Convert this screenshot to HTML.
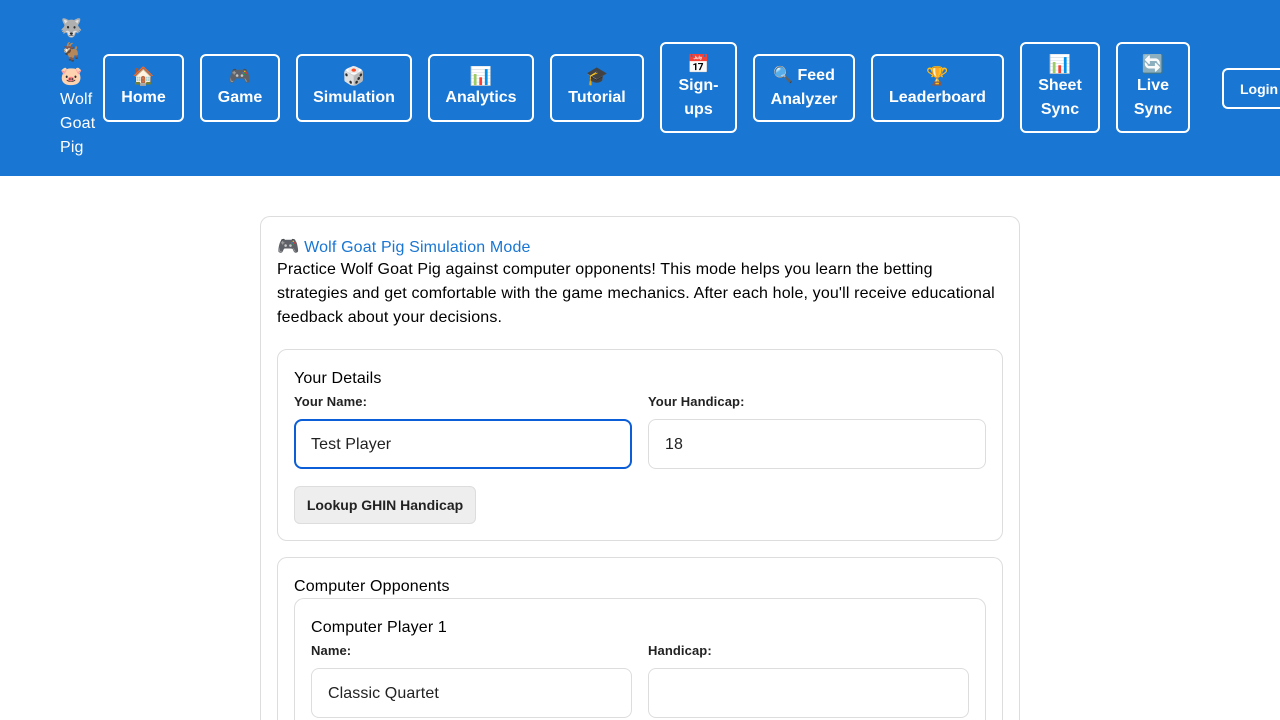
<!DOCTYPE html>
<html><head><meta charset="utf-8"><style>
*{box-sizing:border-box}
html,body{margin:0;width:1280px;height:720px;overflow:hidden}
body{background:#fff;font-family:"Liberation Sans","DejaVu Sans",sans-serif;color:#000}
#w{position:relative;width:1280px;height:720px;overflow:hidden}
.hdr{position:absolute;left:0;top:0;width:1280px;height:176px;background:#1976d2}
.logo{position:absolute;left:60px;top:16px;color:#fff;font-size:16px;line-height:24px;letter-spacing:0.15px}
.logo .e{font-size:18px;line-height:24px;height:24px}
.b{position:absolute;border:2px solid #fff;border-radius:6px;color:#fff;font-weight:bold;font-size:16px;line-height:24px;text-align:center;display:flex;flex-direction:column;justify-content:center;align-items:center}
.b .i{font-size:18px;line-height:20px}
.card{position:absolute;border:1px solid #ddd;border-radius:10px;background:#fff}
.open{border-bottom:none;border-bottom-left-radius:0;border-bottom-right-radius:0}
.lbl{position:absolute;font-size:13px;font-weight:bold;color:#222;letter-spacing:0.1px}
.inp{position:absolute;height:50px;border:1px solid #ddd;border-radius:8px;font-size:16px;padding-left:16px;line-height:50px;color:#222;letter-spacing:0.1px}
.t{position:absolute;font-size:16px;line-height:24px;letter-spacing:0.15px}
</style></head><body><div id="w">
<div class="hdr">
<div class="logo"><div class="e">🐺</div><div class="e">🐐</div><div class="e">🐷</div>Wolf<br>Goat<br>Pig</div>
<div class="b" style="left:103px;top:54px;width:81px;height:68px"><span class="i">🏠</span>Home</div>
<div class="b" style="left:200px;top:54px;width:80px;height:68px"><span class="i">🎮</span>Game</div>
<div class="b" style="left:296px;top:54px;width:116px;height:68px"><span class="i">🎲</span>Simulation</div>
<div class="b" style="left:428px;top:54px;width:106px;height:68px"><span class="i">📊</span>Analytics</div>
<div class="b" style="left:550px;top:54px;width:94px;height:68px"><span class="i">🎓</span>Tutorial</div>
<div class="b" style="left:660px;top:42px;width:77px;height:91px"><span class="i">📅</span>Sign-<br>ups</div>
<div class="b" style="left:753px;top:54px;width:102px;height:68px">🔍 Feed<br>Analyzer</div>
<div class="b" style="left:871px;top:54px;width:133px;height:68px"><span class="i">🏆</span>Leaderboard</div>
<div class="b" style="left:1020px;top:42px;width:80px;height:91px"><span class="i">📊</span>Sheet<br>Sync</div>
<div class="b" style="left:1116px;top:42px;width:74px;height:91px"><span class="i">🔄</span>Live<br>Sync</div>
<div class="b" style="left:1222px;top:68px;width:58px;height:41px;font-size:14px;align-items:flex-start;padding-left:16px;border-right:none;border-radius:6px 0 0 6px">Login</div>
</div>
<div class="card open" style="left:260px;top:216px;width:760px;height:504px"></div>
<div class="t" style="left:277px;top:234px;color:#1976d2"><span style="font-size:18px">🎮</span> Wolf Goat Pig Simulation Mode</div>
<div class="t" style="left:277px;top:258px;width:722px">Practice Wolf Goat Pig against computer opponents! This mode helps you learn the betting strategies and get comfortable with the game mechanics. After each hole, you'll receive educational feedback about your decisions.</div>
<div class="card" style="left:277px;top:349px;width:726px;height:192px"></div>
<div class="t" style="left:294px;top:367px">Your Details</div>
<div class="lbl" style="left:294px;top:394px">Your Name:</div>
<div class="lbl" style="left:648px;top:394px">Your Handicap:</div>
<div class="inp" style="left:294px;top:419px;width:338px;border:2px solid #0b5ed7;padding-left:15px;line-height:48px">Test Player</div>
<div class="inp" style="left:648px;top:419px;width:338px">18</div>
<div style="position:absolute;left:294px;top:486px;width:182px;height:38px;background:#eee;border:1px solid #ddd;border-radius:6px;font-size:14px;font-weight:bold;color:#222;text-align:center;line-height:36px">Lookup GHIN Handicap</div>
<div class="card open" style="left:277px;top:557px;width:726px;height:163px"></div>
<div class="t" style="left:294px;top:575px">Computer Opponents</div>
<div class="card open" style="left:294px;top:598px;width:692px;height:122px"></div>
<div class="t" style="left:311px;top:616px">Computer Player 1</div>
<div class="lbl" style="left:311px;top:643px">Name:</div>
<div class="lbl" style="left:648px;top:643px">Handicap:</div>
<div class="inp" style="left:311px;top:668px;width:321px">Classic Quartet</div>
<div class="inp" style="left:648px;top:668px;width:321px"></div>
</div></body></html>
